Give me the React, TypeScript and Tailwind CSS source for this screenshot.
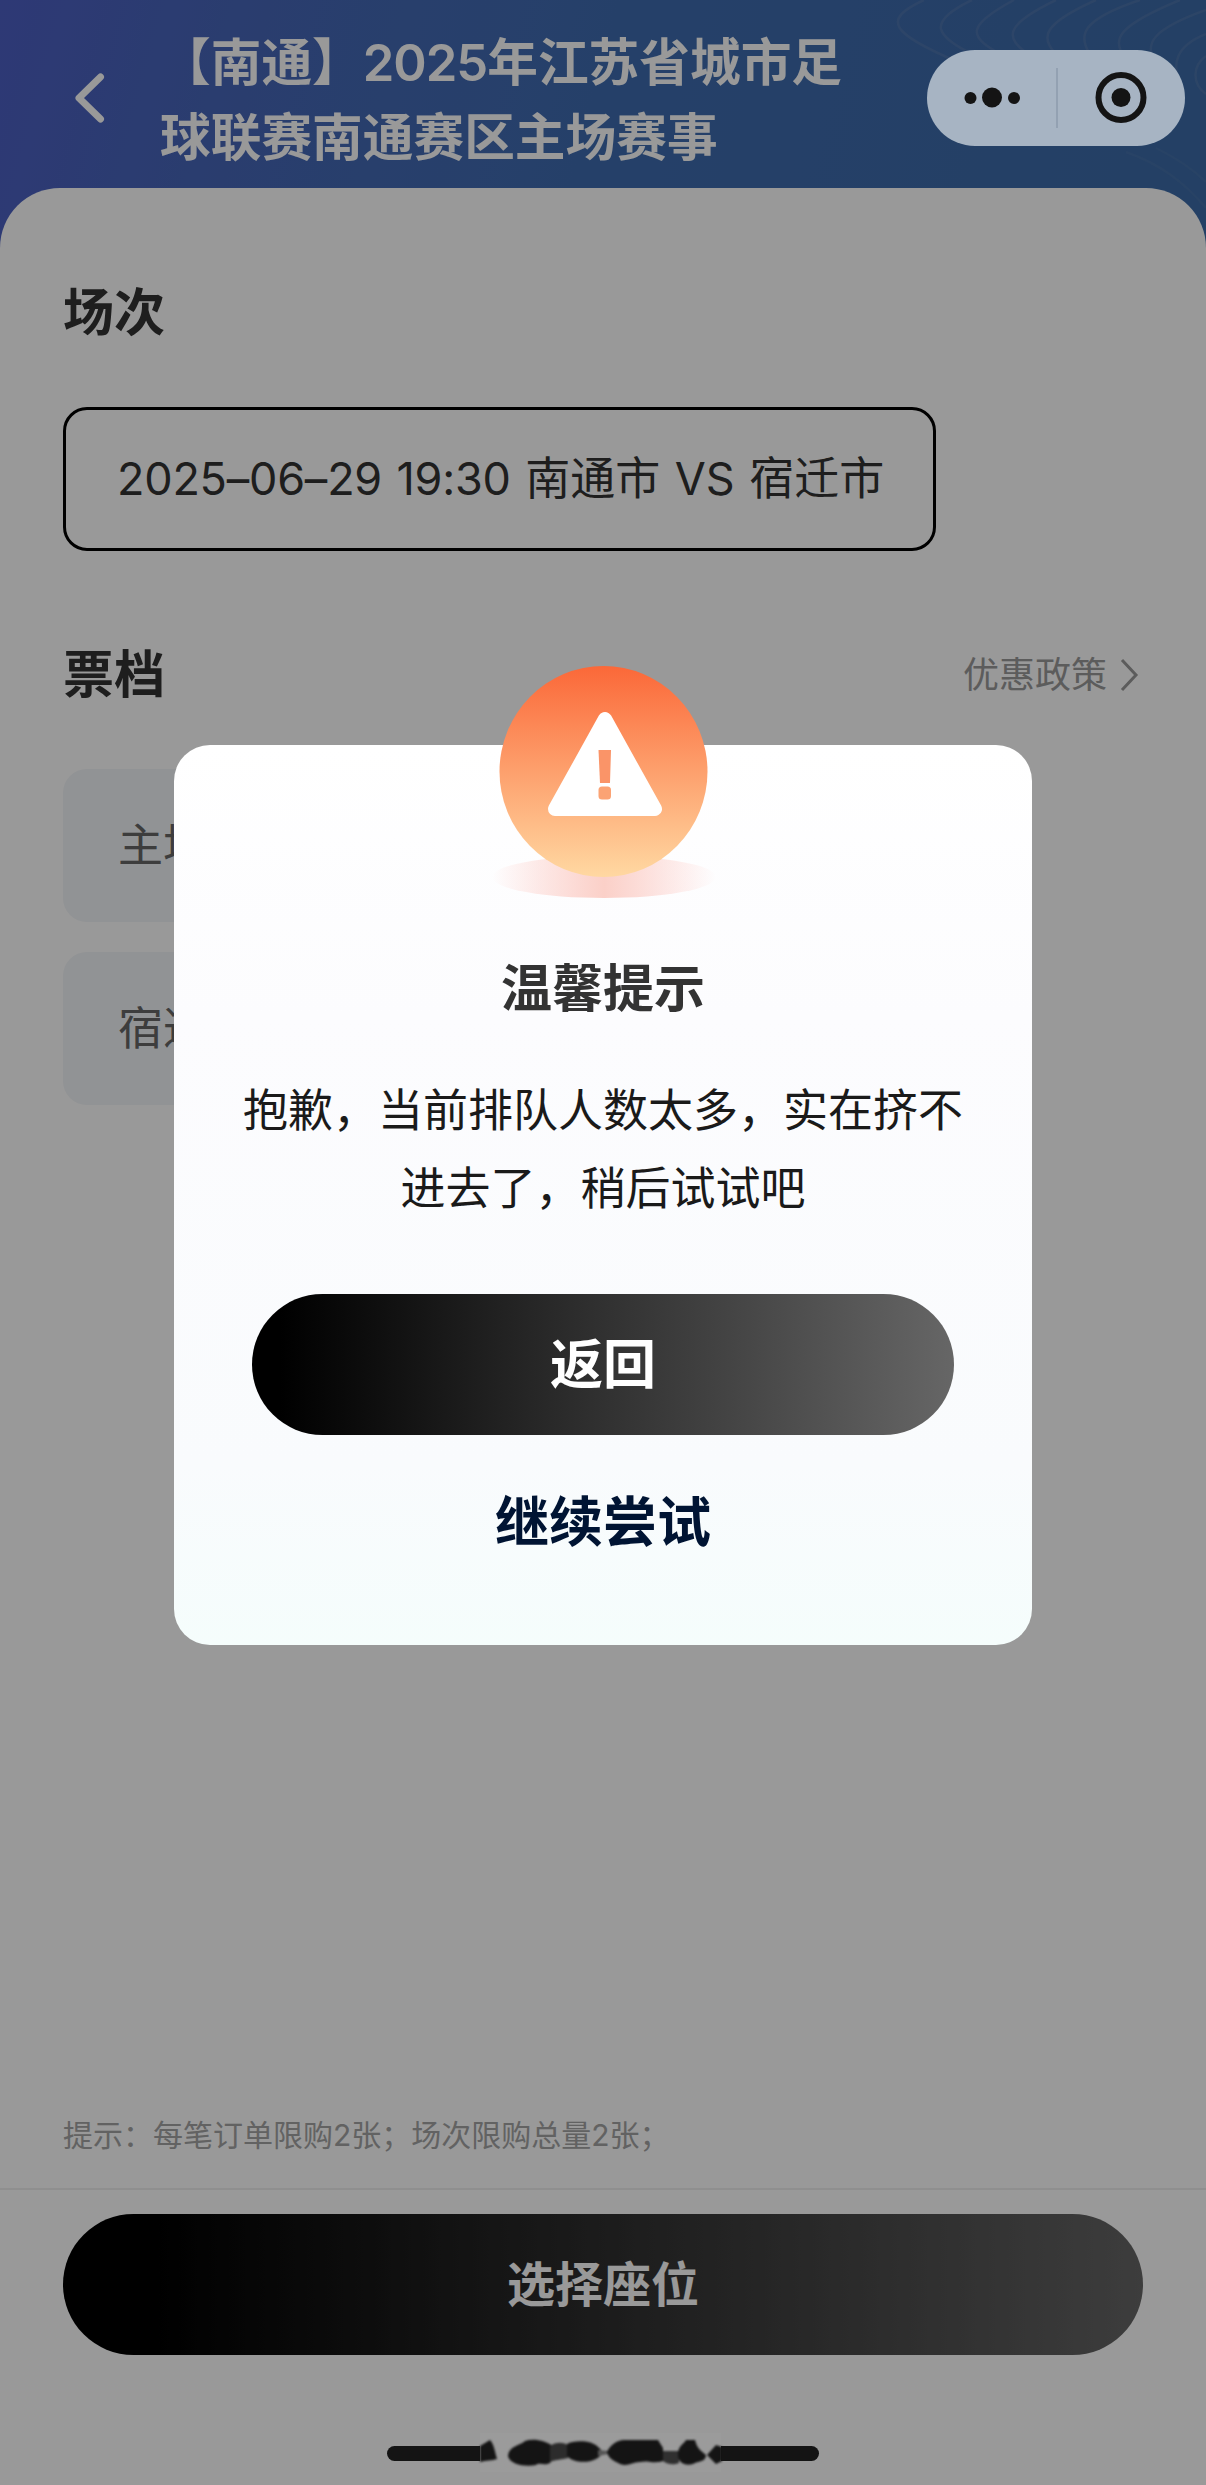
const tickets = ["主场", "宿迁"]

const HeaderLines = () => (
  <svg className="absolute top-0 right-0" width="320" height="260" viewBox="886 0 320 260" fill="none" stroke="#7f93b5" strokeOpacity="0.22" strokeWidth="2.5">
    <path d="M924 0C880 20 892 34 958 62" />
    <path d="M972 0C926 22 934 36 976 56" />
    <path d="M1014 0C966 26 968 36 1000 54" />
    <path d="M1056 0C1002 26 1006 38 1028 54" />
    <path d="M1096 0C1042 24 1040 38 1056 54" />
    <path d="M1140 0C1080 20 1078 36 1090 54" />
    <path d="M1180 0C1112 28 1116 40 1122 54" />
    <path d="M1206 10C1150 30 1148 44 1152 56" />
    <path d="M1206 34C1176 46 1170 64 1182 88" />
    <path d="M1206 56C1192 66 1192 84 1206 94" />
    <path d="M1156 148C1172 156 1190 166 1206 182" strokeOpacity="0.12" />
    <path d="M1126 152C1160 164 1184 182 1206 208" strokeOpacity="0.12" />
  </svg>
)

const WarningIcon = () => (
  <svg className="absolute left-[315px] top-[-85px]" width="230" height="245" viewBox="0 0 230 245">
    <defs>
      <linearGradient id="warn" x1="0" y1="0" x2="0" y2="1">
        <stop offset="0" stopColor="#fb6838" />
        <stop offset="1" stopColor="#ffd8a2" />
      </linearGradient>
      <linearGradient id="glow" x1="0" y1="0" x2="1" y2="0">
        <stop offset="0" stopColor="#fdc9c4" stopOpacity="0" />
        <stop offset="0.5" stopColor="#fbd0c8" />
        <stop offset="1" stopColor="#fdc9c4" stopOpacity="0" />
      </linearGradient>
    </defs>
    <ellipse cx="115" cy="217" rx="112" ry="21" fill="url(#glow)" />
    <ellipse cx="114.5" cy="111.5" rx="104" ry="105.5" fill="url(#warn)" />
    <path d="M116 59L166 149H66Z" fill="#fff" stroke="#fff" strokeWidth="14" strokeLinejoin="round" />
    <path d="M109.5 90H122L121 123H111Z" fill="#fa9468" />
    <rect x="109.5" y="126.500" width="12.500" height="13" rx="3.500" fill="#fba374" />
  </svg>
)

const HomeBar = () => (
  <svg className="absolute left-[387px] top-[2432px]" width="434" height="42" viewBox="387 2432 434 42">
    <rect x="387" y="2446" width="432" height="15" rx="7.500" fill="#141414" />
    <rect x="480" y="2433" width="241" height="39" fill="#9b9b9b" />
    <g fill="#141414" style={{ filter: "blur(0.8px)" }}>
      <path d="M480 2446L490 2440C494 2444 495 2452 497 2459C492 2461 486 2460 480 2462Z" />
      <path d="M508 2456C509 2446 519 2446 525 2441C534 2438 546 2441 553 2446C556 2452 554 2458 550 2463C544 2466 540 2462 536 2465C526 2467 510 2465 508 2456Z" />
      <path d="M550 2446C556 2442 562 2442 568 2445V2458C562 2460 556 2459 550 2462Z" fill="#2c2c2c" />
      <path d="M567 2444C574 2440 592 2440 598 2447C604 2451 602 2456 596 2459C586 2464 572 2462 567 2456Z" />
      <path d="M598 2450L608 2451V2454L598 2456Z" fill="#555" />
      <path d="M607 2452C610 2445 617 2440 624 2440H658L663 2448V2461C654 2464 648 2460 640 2462C632 2462 628 2467 620 2464C614 2461 608 2458 607 2452Z" />
      <path d="M663 2451H679V2463C674 2465 668 2465 663 2461Z" fill="#303030" />
      <path d="M678 2454C678 2446 684 2444 686 2440H695C697 2448 700 2450 706 2455C706 2462 698 2461 693 2464C686 2466 678 2464 678 2454Z" />
      <path d="M707 2455L716 2445L722 2447V2461L716 2464Z" />
    </g>
  </svg>
)

const App = () => {
  return (
    <div className="relative flex h-[2485px] w-[1206px] flex-col overflow-hidden bg-[linear-gradient(105deg,#4d5fc4_0px,#4667b8_260px,#3f6cb0_600px,#3c6ba8_1206px)] bg-[length:100%_260px] bg-no-repeat font-['Inter','Noto_Sans_CJK_SC',sans-serif]">
      <HeaderLines />

      {/* Header */}
      <div className="flex h-[188px] shrink-0 items-start">
        <svg className="mt-[70px] ml-[72px]" width="36" height="56" viewBox="0 0 36 56" fill="none" stroke="#fff" strokeWidth="7" strokeLinecap="round" strokeLinejoin="round">
          <path d="M28.500 7L7 28L28.500 49" />
        </svg>
        <div className="mt-[25px] ml-[52px] text-[50.700px] leading-[75px] font-semibold whitespace-nowrap text-white">
          <div>【南通】<span className="tracking-[-0.02em]">2025</span>年江苏省城市足</div>
          <div>球联赛南通赛区主场赛事</div>
        </div>
      </div>

      {/* Sheet */}
      <div className="flex flex-1 flex-col rounded-t-[60px] bg-white pt-[89px]">
        <div className="flex flex-col items-start px-[63px]">
          <div className="text-[51px] leading-[72px] font-bold text-[#333]">场次</div>
          <div className="mt-[58px] flex h-[144px] w-[873px] items-center rounded-[24px] border-[3px] border-black pl-[51px] text-[45px] whitespace-pre text-[#333] [word-spacing:2px]">
            <span className="tracking-[-0.005em]">2025–06–29 19:30 </span>南通市 VS 宿迁市
          </div>
          <div className="mt-[88px] flex w-full items-center justify-between">
            <div className="text-[51px] leading-[72px] font-bold text-[#333]">票档</div>
            <div className="flex items-center gap-3 text-[36px] leading-[54px] text-[#999]">
              优惠政策
              <svg className="mr-1" width="20" height="36" viewBox="0 0 20 36" fill="none" stroke="currentColor" strokeWidth="3">
                <path d="M3 3L17 18L3 33" />
              </svg>
            </div>
          </div>
          <div className="mt-[58px] flex flex-col gap-[30px]">
            {tickets.map((t) => (
              <div key={t} className="flex h-[153px] w-[420px] items-center rounded-[24px] bg-[#f2f5f8] pl-[55px] text-[45px] text-[#666]">{t}</div>
            ))}
          </div>
        </div>

        {/* Footer */}
        <div className="mt-auto flex h-[372px] flex-col">
          <div className="px-[63px] text-[30px] leading-[44px] text-[#a3a3a3]">提示：每笔订单限购2张；场次限购总量2张；</div>
          <div className="mt-[31px] h-[2px] bg-[#eee]" />
          <div className="mx-[63px] mt-6 flex h-[141px] items-center justify-center rounded-full bg-linear-to-r/srgb from-black from-8% to-[#666] text-[48px] font-semibold text-white">选择座位</div>
        </div>
      </div>

      {/* Dialog */}
      <div className="absolute inset-0 flex items-start justify-center bg-black/40 pt-[745px]">
        <div className="relative flex h-[900px] w-[858px] flex-col items-center rounded-[36px] bg-[linear-gradient(180deg,#fff,#fcfcfe_30%,#f9fbfd_80%,#f5fdfc)] pt-[208px]">
          <WarningIcon />
          <div className="text-[51px] leading-[72px] font-bold text-[#333]">温馨提示</div>
          <div className="mt-[47px] w-[724px] text-center text-[45px] leading-[78px] text-[#1a1a1a]">抱歉，当前排队人数太多，实在挤不进去了，稍后试试吧</div>
          <div className="mt-[66px] flex h-[141px] w-[702px] items-center justify-center rounded-full bg-linear-to-r/srgb from-black from-4% to-[#666] pt-0.5 text-[53px] font-semibold text-white">返回</div>
          <div className="mt-12 text-[54px] leading-[80px] font-bold text-[#001433]">继续尝试</div>
        </div>
      </div>

      {/* Mini program capsule */}
      <svg className="absolute top-[50px] left-[927px]" width="258" height="96" viewBox="0 0 258 96">
        <rect width="258" height="96" rx="48" fill="#a7b4c3" />
        <path d="M130 18V78" stroke="#8d9bac" strokeWidth="1.500" />
        <g fill="#141414">
          <circle cx="43.500" cy="48" r="6" />
          <circle cx="65" cy="47.500" r="10" />
          <circle cx="87" cy="48" r="6" />
          <circle cx="194" cy="47.500" r="9.500" />
        </g>
        <circle cx="194" cy="47.500" r="22.500" fill="none" stroke="#141414" strokeWidth="6" />
      </svg>

      <HomeBar />
    </div>
  )
}
export default App
